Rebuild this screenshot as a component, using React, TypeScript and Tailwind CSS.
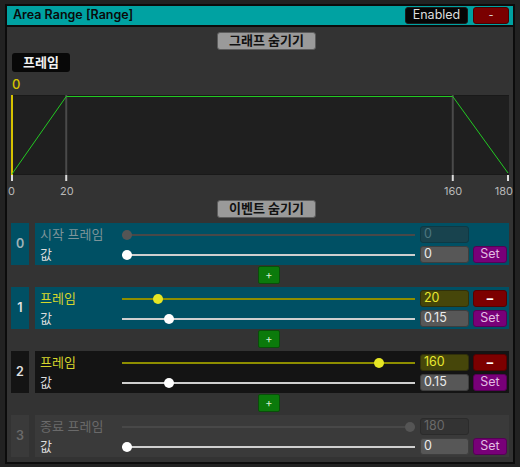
import React from "react";

type Tone = "teal" | "dark" | "gray";

type EventRow = {
  idx: string;
  label: string;
  tone: Tone;
  locked: boolean;
  frame: number;
  value: number;
  valueText: string;
};

const ROWS: EventRow[] = [
  { idx: "0", label: "시작 프레임", tone: "teal", locked: true, frame: 0, value: 0, valueText: "0" },
  { idx: "1", label: "프레임", tone: "teal", locked: false, frame: 20, value: 0.15, valueText: "0.15" },
  { idx: "2", label: "프레임", tone: "dark", locked: false, frame: 160, value: 0.15, valueText: "0.15" },
  { idx: "3", label: "종료 프레임", tone: "gray", locked: true, frame: 180, value: 0, valueText: "0" },
];

const TONE_BG: Record<Tone, string> = {
  teal: "bg-[#005064]",
  dark: "bg-[#141414]",
  gray: "bg-[#3a3a3a]",
};

const INDEX_TEXT: Record<string, string> = {
  "0": "text-[#9fb3b8]",
  "1": "text-[#e2e2e2]",
  "2": "text-[#e2e2e2]",
  "3": "text-[#6a6a6a]",
};

const LOCKED_LABEL: Record<Tone, string> = {
  teal: "text-[#7d9499]",
  dark: "text-[#6a6a6a]",
  gray: "text-[#6a6a6a]",
};

const LOCKED_INPUT: Record<Tone, string> = {
  teal: "bg-[#18434e] border-[#0e3944] text-[#4d7780]",
  dark: "bg-[#2e2e2e] border-[#262626] text-[#6a6a6a]",
  gray: "bg-[#333333] border-[#2b2b2b] text-[#6a6a6a]",
};

function Slider({ pct, track, thumb }: { pct: number; track: string; thumb: string }) {
  return (
    <div className="relative flex h-[10px] w-[293px] items-center">
      <div className={`h-[2px] w-full ${track}`} />
      <div
        className={`absolute top-0 h-[10px] w-[10px] rounded-full ${thumb}`}
        style={{ left: `${pct * 283}px` }}
      />
    </div>
  );
}

function Graph() {
  const fx = (f: number) => (f / 180) * 497;
  return (
    <div className="pl-[4px]">
      <svg width="500" height="86" className="block">
        <rect x="0" y="0" width="498" height="80" fill="#1f1f1f" />
        <rect x="0" y="0" width="498" height="1" fill="#191919" />
        <rect x="0" y="79" width="498" height="1" fill="#191919" />
        <rect x={fx(20) - 1} y="0" width="2" height="80" fill="#4a4a4a" />
        <rect x={fx(160) - 1} y="0" width="2" height="80" fill="#4a4a4a" />
        <rect x="0" y="0" width="2" height="80" fill="#d6c200" />
        <polyline
          points={`1,79 ${fx(20)},1.5 ${fx(160)},1.5 497,78`}
          fill="none"
          stroke="#22c922"
          strokeWidth="1"
        />
        <rect x="0" y="80" width="2" height="6" fill="#dcdcdc" />
        <rect x={fx(20) - 1} y="80" width="2" height="6" fill="#dcdcdc" />
        <rect x={fx(160) - 1} y="80" width="2" height="6" fill="#dcdcdc" />
        <rect x="496" y="80" width="2" height="6" fill="#dcdcdc" />
      </svg>
      <div className="relative h-[19px] text-[11px] leading-[14px] text-[#b8b8b8]">
        <span className="absolute left-[-3px] top-[3px]">0</span>
        <span className="absolute left-[49px] top-[3px]">20</span>
        <span className="absolute left-[433px] top-[3px]">160</span>
        <span className="absolute right-[0px] top-[3px]">180</span>
      </div>
    </div>
  );
}

function GrayButton({ children }: { children: React.ReactNode }) {
  return (
    <div className="ml-[210px] flex h-[18px] w-[99px] items-center justify-center rounded-[3px] border border-[#5c5c5c] bg-[#9a9a9a] text-[13px] font-bold text-[#111]">
      {children}
    </div>
  );
}

function PlusButton() {
  return (
    <div className="mb-[3px] ml-[247px] mt-[1px] flex h-[18px] w-[22px] items-center justify-center rounded-[2px] border border-[#0a4d0a] bg-[#0b7a0b] text-[11px] leading-none text-[#d6f0d6]">
      +
    </div>
  );
}

function Row({ row }: { row: EventRow }) {
  const bg = TONE_BG[row.tone];
  const labelCls = row.locked ? LOCKED_LABEL[row.tone] : "text-[#d6d62c]";
  const frameTrack = row.locked ? "bg-[#484848]" : "bg-[#8e8e00]";
  const frameThumb = row.locked ? "bg-[#555555]" : "bg-[#e6e625]";
  const frameInput = row.locked
    ? LOCKED_INPUT[row.tone]
    : "bg-[#46460a] border-[#30300a] text-[#e8e830]";

  return (
    <div className="flex h-[42px] gap-[6px]">
      <div
        className={`flex w-[18px] items-center justify-center text-[12.5px] font-semibold ${bg} ${INDEX_TEXT[row.idx]}`}
      >
        {row.idx}
      </div>
      <div className={`flex flex-1 flex-col gap-[3px] pl-[5px] pr-[2px] pt-[3px] ${bg}`}>
        <div className="flex h-[17px] items-center">
          <div className={`w-[82px] text-[13px] ${labelCls}`}>{row.label}</div>
          <Slider pct={row.frame / 180} track={frameTrack} thumb={frameThumb} />
          <div
            className={`ml-[5px] flex h-[17px] w-[49px] items-center rounded-[3px] border pl-[3px] text-[12.5px] ${frameInput}`}
          >
            {row.frame}
          </div>
          {row.locked ? (
            <div className="ml-[4px] w-[34px]" />
          ) : (
            <div className="ml-[4px] flex h-[17px] w-[34px] items-center justify-center rounded-[3px] border border-[#560000] bg-[#7c0000] text-[13px] font-bold leading-none text-white">
              −
            </div>
          )}
        </div>
        <div className="flex h-[17px] items-center">
          <div className="w-[82px] text-[13px] text-[#dcdcdc]">값</div>
          <Slider pct={row.value} track="bg-[#cfcfcf]" thumb="bg-white" />
          <div className="ml-[5px] flex h-[17px] w-[49px] items-center rounded-[3px] border border-[#3e3e3e] bg-[#575757] pl-[3px] text-[12.5px] text-[#ececec]">
            {row.valueText}
          </div>
          <div className="ml-[4px] flex h-[17px] w-[34px] items-center justify-center rounded-[3px] border border-[#560056] bg-[#780078] text-[12.5px] text-[#e2bce2]">
            Set
          </div>
        </div>
      </div>
    </div>
  );
}

export default function App() {
  return (
    <div
      className="h-[467px] w-[520px] overflow-hidden bg-[#222222] px-[5px] pt-[4px]"
      style={{ fontFamily: 'Inter, "Noto Sans CJK KR", sans-serif' }}
    >
      <div className="flex h-[460px] flex-col border-2 border-[#0c0c0c] bg-[#333333]">
        <div className="flex h-[21px] items-center border-b-2 border-[#0c0c0c] bg-[#00a2a2] pl-[6px] pr-[4px]">
          <div className="flex-1 text-[12.5px] font-semibold text-[#0a0a0a]">Area Range [Range]</div>
          <div className="flex h-[17px] w-[63px] items-center justify-center rounded-[3px] border border-[#1c1c1c] bg-[#050505] text-[12.5px] text-[#dedede]">
            Enabled
          </div>
          <div className="ml-[5px] flex h-[17px] w-[36px] items-center justify-center rounded-[3px] border border-[#4a0000] bg-[#7a0000] text-[11px] text-[#d8d8d8]">
            -
          </div>
        </div>

        <div className="mt-[5px]">
          <GrayButton>그래프 숨기기</GrayButton>
        </div>
        <div className="ml-[5px] mt-[3px] flex h-[19px] w-[58px] items-center justify-center rounded-[3px] bg-[#080808] text-[13px] font-bold text-[#f0f0f0]">
          프레임
        </div>
        <div className="h-[23px] pl-[5px] pt-[4px] text-[13px] font-medium leading-[16px] text-[#d6c400]">0</div>
        <Graph />
        <GrayButton>이벤트 숨기기</GrayButton>

        <div className="mt-[5px] px-[4px]">
          {ROWS.map((row, i) => (
            <div key={row.idx}>
              <Row row={row} />
              {i < ROWS.length - 1 && <PlusButton />}
            </div>
          ))}
        </div>
      </div>
    </div>
  );
}
